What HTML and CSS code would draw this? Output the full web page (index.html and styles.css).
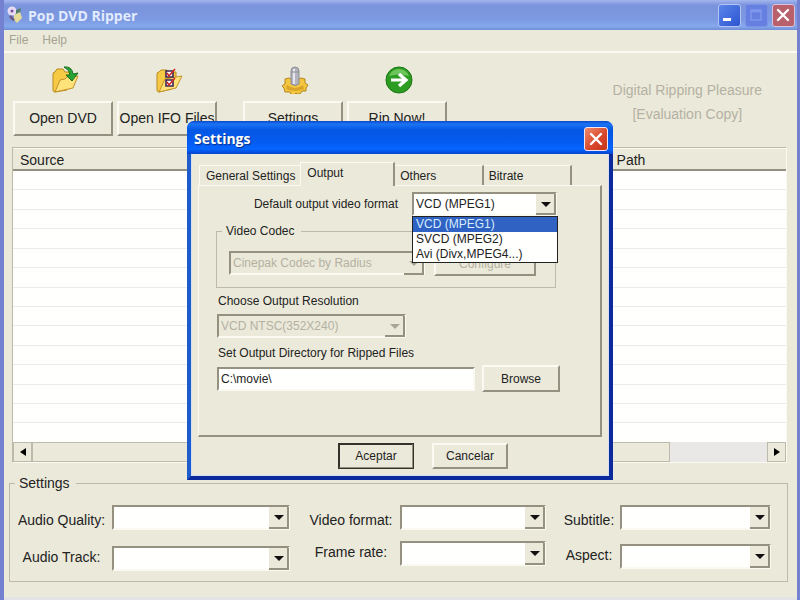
FILE: index.html
```html
<!DOCTYPE html>
<html lang="en">
<head>
<meta charset="utf-8">
<title>Pop DVD Ripper</title>
<link rel="stylesheet" href="styles.css">
</head>
<body>
<main class="window">
  <header class="titlebar">
    <svg class="app-icon" viewBox="0 0 16 18" width="16" height="18" aria-hidden="true">
      <circle cx="5" cy="5" r="4.5" fill="#e8dcf4"/><circle cx="5" cy="5" r="1.5" fill="#7a4f9c"/>
      <path d="M9 4l5-2-1 6-4 1z" fill="#4f7f6a"/><path d="M7 9l6-3 2 6-5 5-3-3z" fill="#e6dc9a"/><path d="M4 9l4 5-2 1-4-4z" fill="#6a5a80"/>
    </svg>
    <h1 class="title">Pop DVD Ripper</h1>
    <div class="controls">
      <button class="ctl min" aria-label="Minimize"><svg viewBox="0 0 20 20" width="20" height="20"><path d="M4 13h8v3H4z" fill="#fff"/></svg></button>
      <button class="ctl max" aria-label="Maximize" disabled><svg viewBox="0 0 20 20" width="20" height="20"><path d="M5 5h10v10H5zM5 6.500h10" fill="none" stroke="#7f97ec" stroke-width="1.500"/></svg></button>
      <button class="ctl close" aria-label="Close"><svg viewBox="0 0 20 20" width="20" height="20"><path d="M5 5l10 10M15 5L5 15" stroke="#fff" stroke-width="2.400" stroke-linecap="round"/></svg></button>
    </div>
  </header>
  <nav class="menu"><a href="#file">File</a><a href="#help">Help</a></nav>
  <section class="toolbar">
    <div class="tool">
      <svg viewBox="0 0 28 28" width="28" height="28" aria-hidden="true">
        <path d="M2 8q0-2 2-2l2-3h6l2 3h5v4l-3 14-12 2q-2 0-2-2z" fill="#f6ca45" stroke="#b98a1e"/>
        <path d="M4 26l5-12 5-1 2-2 11-1-5 12z" fill="#ffe27a" stroke="#c2922a"/>
        <path d="M13 1q8-1 9 7l5-1-6 8-6-6 4 0q0-5-6-8z" fill="#2aa336" stroke="#14701f"/>
      </svg>
      <button class="btn">Open DVD</button>
    </div>
    <div class="tool">
      <svg viewBox="0 0 28 28" width="28" height="28" aria-hidden="true">
        <path d="M2 8q0-2 2-2l2-2h6l2 2h7v5l-4 12-13 3q-2 0-2-2z" fill="#f6ca45" stroke="#b98a1e"/>
        <path d="M4 26l6-13 17-3-6 12z" fill="#ffe27a" stroke="#c2922a"/>
        <path d="M11 5h7v6h-7zM11 14h7v6h-7z" fill="#fff" stroke="#3a2450" stroke-width="1.600"/>
        <path d="M12 7l2 3 6-7M12 16l2 3 6-7" fill="none" stroke="#cf2a22" stroke-width="1.600"/>
      </svg>
      <button class="btn">Open IFO Files</button>
    </div>
    <div class="tool apart">
      <svg viewBox="0 0 28 28" width="28" height="28" aria-hidden="true">
        <path d="M4 13l4-1 2 1h8l2-1 4 1v4l3 2-2 3 0 3-4 0-2 3h-3l-1-1-2 2-3-1-1-2-5 0-1-4-2-2 3-2z" fill="#f3c63f" stroke="#b3851c"/>
        <path d="M6 19q8 6 16 0l1 4q-9 4-18 0z" fill="#dba52a"/>
        <path d="M10 5q0-4 4-4t4 4v13q-4 3-8 0z" fill="#b4b4be" stroke="#8c8c96"/><path d="M13 3v15" stroke="#e6e6ee" stroke-width="2"/><path d="M10 6h8" stroke="#8c8c96"/>
      </svg>
      <button class="btn">Settings</button>
    </div>
    <div class="tool">
      <svg viewBox="0 0 28 28" width="28" height="28" aria-hidden="true">
        <circle cx="14" cy="14" r="13" fill="#2c9c22" stroke="#187512"/><path d="M4 10q3-7 10-7t10 7q-10-3-20 0z" fill="#6cc65c"/>
        <path d="M6 14h14M14 8l7 6-7 6" fill="none" stroke="#fff" stroke-width="3.200"/>
      </svg>
      <button class="btn">Rip Now!</button>
    </div>
    <p class="slogan">Digital Ripping Pleasure<br>[Evaluation Copy]</p>
  </section>
  <section class="list">
    <table class="grid">
      <thead><tr><th class="source">Source</th><th>Path</th></tr></thead>
      <tbody>
        <tr><td></td><td></td></tr><tr><td></td><td></td></tr><tr><td></td><td></td></tr><tr><td></td><td></td></tr>
        <tr><td></td><td></td></tr><tr><td></td><td></td></tr><tr><td></td><td></td></tr><tr><td></td><td></td></tr>
        <tr><td></td><td></td></tr><tr><td></td><td></td></tr><tr><td></td><td></td></tr><tr><td></td><td></td></tr>
        <tr><td></td><td></td></tr><tr><td></td><td></td></tr>
      </tbody>
    </table>
    <div class="scrollbar">
      <button class="arrow" aria-label="Scroll left"><svg viewBox="0 0 6 8" width="6" height="8"><path d="M6 0v8L0 4z"/></svg></button>
      <div class="thumb"></div><div class="track"></div>
      <button class="arrow" aria-label="Scroll right"><svg viewBox="0 0 6 8" width="6" height="8"><path d="M0 0v8l6-4z"/></svg></button>
    </div>
  </section>
  <fieldset class="group settings">
    <legend>Settings</legend>
    <div class="pairs audio">
      <label for="aq">Audio Quality:</label><span class="combo"><select id="aq"></select></span>
      <label for="at">Audio Track:</label><span class="combo"><select id="at"></select></span>
    </div>
    <div class="pairs video">
      <label for="vf">Video format:</label><span class="combo"><select id="vf"></select></span>
      <label for="fr">Frame rate:</label><span class="combo"><select id="fr"></select></span>
    </div>
    <div class="pairs sub">
      <label for="st">Subtitle:</label><span class="combo"><select id="st"></select></span>
      <label for="as">Aspect:</label><span class="combo"><select id="as"></select></span>
    </div>
  </fieldset>
</main>

<section class="dialog" role="dialog" aria-labelledby="dlg-title">
  <header class="dialog-bar">
    <h2 class="title" id="dlg-title">Settings</h2>
    <button class="ctl close" aria-label="Close dialog"><svg viewBox="0 0 20 20" width="20" height="20"><path d="M5 5l10 10M15 5L5 15" stroke="#fff" stroke-width="2.400" stroke-linecap="round"/></svg></button>
  </header>
  <div class="dialog-body">
    <div class="tabs" role="tablist">
      <button class="tab first" role="tab">General Settings</button>
      <button class="tab active" role="tab" aria-selected="true">Output</button>
      <button class="tab" role="tab">Others</button>
      <button class="tab" role="tab">Bitrate</button>
    </div>
    <div class="panel" role="tabpanel">
      <div class="format-row">
        <label for="fmt">Default output video format</label>
        <span class="combo"><select id="fmt"><option>VCD (MPEG1)</option></select>
          <ul class="options" role="listbox" aria-label="Formats">
            <li role="option" aria-selected="true">VCD (MPEG1)</li><li role="option">SVCD (MPEG2)</li><li role="option">Avi (Divx,MPEG4...)</li>
          </ul>
        </span>
      </div>
      <fieldset class="group codec">
        <legend>Video Codec</legend>
        <span class="combo"><select aria-label="Video Codec" disabled><option>Cinepak Codec by Radius</option></select></span>
        <button class="btn" disabled>Configure</button>
      </fieldset>
      <label class="caption" for="res">Choose Output Resolution</label>
      <span class="combo resolution"><select id="res" disabled><option>VCD NTSC(352X240)</option></select></span>
      <label class="caption" for="dir">Set Output Directory for Ripped Files</label>
      <div class="dir-row"><input id="dir" type="text" value="C:\movie\"><button class="btn">Browse</button></div>
    </div>
    <footer class="actions"><button class="btn default">Aceptar</button><button class="btn">Cancelar</button></footer>
  </div>
</section>
</body>
</html>
```
FILE: styles.css
```css
:root {
  --face: #ebe9d9;
  --dark: #949181;
  --line: #bdbaa9;
  --light: #fbfaf2;
  --muted: #b4b1a3;
}
* { box-sizing: border-box; }
body {
  margin: 0;
  position: relative;
  font: 14px "Liberation Sans", Arial, sans-serif;
  color: #22221e;
}
button, select, input { font: inherit; color: inherit; margin: 0; border-radius: 0; }
h1, h2, p, ul { margin: 0; padding: 0; }

.window {
  display: flex;
  flex-direction: column;
  min-height: 100vh;
  background: var(--face);
  border: solid #7481d0;
  border-width: 0 3px 0 4px;
}
.window::after { content: ""; height: 3px; background: #e3e3e6; }
.titlebar {
  display: flex;
  align-items: center;
  gap: 5px;
  height: 30px;
  padding: 0 2px 0 3px;
  background: linear-gradient(#a3b6ee 0, #7b94dc 5px, #7c99e1 20px, #86a9ec 26px, #6f8ed8 30px);
}
.title { font: bold 14px "Open Sans", sans-serif; flex: 1; }
.titlebar .title { color: #e2ebff; }
.controls { display: flex; gap: 4px; }
.ctl { width: 23px; height: 23px; padding: 0; border: 1px solid #b3c4f5; border-radius: 3px; background: #3f68de; }
.ctl svg { display: block; }
.min { background: linear-gradient(135deg, #5a85ea, #2c55d0); }
.max { background: #6580e0; border-color: #7b92e6; }
.close { background: #b8606c; border-color: #dcc0dc; }

.menu { display: flex; gap: 14px; height: 23px; padding: 3px 5px 0; font-size: 12px; border-bottom: 2px solid var(--light); }
.menu a { color: #a5a394; text-decoration: none; }

.toolbar { display: flex; gap: 4px; padding: 13px 35px 0 9px; height: 94px; }
.tool { display: flex; flex-direction: column; align-items: center; gap: 7px; width: 100px; }
.tool svg { margin-left: 4px; }
.apart { margin-left: 22px; }
.btn {
  background: var(--face);
  padding: 0;
  border: solid;
  border-width: 2px;
  border-color: var(--light) var(--dark) var(--dark) var(--light);
  white-space: nowrap;
}
.tool .btn { width: 100%; height: 35px; padding-bottom: 2px; }
.slogan { margin-left: auto; padding-top: 12px; text-align: center; line-height: 24px; color: var(--muted); }

.list {
  flex: 1;
  display: flex;
  flex-direction: column;
  margin: 0 10px 0 8px;
  border: solid;
  border-width: 1px;
  border-color: var(--line) var(--light) var(--light) var(--line);
}
.grid { flex: 1; width: 100%; background: #fffffd; display: flex; flex-direction: column; }
.grid thead, .grid tbody, .grid tr { display: flex; width: 100%; }
.grid tbody { flex: 1; flex-direction: column; }
.grid tbody tr { flex: 1; border-bottom: 1px solid #ecece6; }
.grid tbody tr:last-child { border-bottom: 0; }
.grid th { flex: 21; height: 23px; padding: 3px 6px 0 7px; font-weight: normal; text-align: left; background: var(--face); border-top: 1px solid var(--light); border-bottom: 2px solid var(--dark); }
.grid .source { flex: 75; }
.scrollbar { display: flex; height: 20px; background: #e9e8e6; }
.arrow { display: grid; place-items: center; width: 19px; padding: 0; border: 1px solid var(--line); background: var(--face); }
.thumb { flex: 637; background: var(--face); border: 1px solid var(--line); }
.track { flex: 97; }

.group { min-width: 0; margin: 0; border: 1px solid var(--line); }
.group legend { padding: 0 6px 0 4px; }
.settings { display: grid; grid-template-columns: 273fr 238fr 207fr; column-gap: 18px; margin: 12px 9px 15px 5px; padding: 14px 16px 10px 7px; }
.settings legend { margin-left: -2px; line-height: 16px; }
.pairs { display: grid; align-content: start; align-items: center; justify-items: center; column-gap: 6px; }
.pairs label { line-height: 16px; padding-bottom: 4px; white-space: nowrap; }
.pairs label:first-child { padding: 4px 0 0; }
.audio { grid-template-columns: 89px 1fr; row-gap: 16px; }
.video { grid-template-columns: 86px 1fr; row-gap: 11px; }
.sub { grid-template-columns: 50px 1fr; row-gap: 14px; }

.combo { position: relative; display: block; width: 100%; }
.combo select, #dir {
  display: block;
  width: 100%;
  height: 25px;
  padding: 0 18px 0 2px;
  appearance: none;
  background: #fffffd;
  border: 2px solid;
  border-color: var(--dark) var(--light) var(--light) var(--dark);
  outline: 0;
}
.combo::before {
  content: "";
  position: absolute;
  right: 1px;
  top: 2px;
  bottom: 1px;
  width: 18px;
  background: var(--face);
  border: solid var(--dark);
  border-width: 0 2px 2px 0;
  pointer-events: none;
}
.combo::after {
  content: "";
  position: absolute;
  right: 6px;
  top: 10px;
  border: 5px solid transparent;
  border-top-color: #111;
  border-bottom: 0;
  pointer-events: none;
}
.combo:has(select:disabled)::after { border-top-color: #a8a595; }
.combo select:disabled { background: var(--face); color: var(--muted); opacity: 1; }
.btn:disabled { color: var(--muted); }

.dialog {
  position: absolute;
  left: 187px;
  top: 121px;
  width: 426px;
  font-size: 12px;
  background: var(--face);
  border: solid;
  border-width: 0 4px 4px;
  border-color: #0b2b9c #0b2b9c #0b2b9c #1e5bcb;
  border-radius: 8px 8px 0 0;
}
.dialog-bar {
  display: flex;
  align-items: center;
  height: 33px;
  margin: 0 -4px;
  padding: 2px 5px 0 7px;
  border-radius: 7px 7px 0 0;
  background: linear-gradient(#0a48c8 0, #1c74f4 3px, #0457e4 9px, #055cf2 22px, #0566ff 28px, #0444cc 33px);
}
.dialog-bar .title { color: #fff; text-shadow: 1px 1px 1px #0a2f88; }
.dialog-bar .close { width: 24px; height: 24px; background: linear-gradient(135deg, #ee8a6a, #d8452a 60%, #c4381e); border-color: #f4e6ee; }
.dialog-bar .close svg { margin: 1px; }
.dialog-body { padding: 8px 6px 6px; border: 1px solid #d6dff4; border-top: 0; }
.tabs { display: flex; align-items: flex-end; padding: 0 30px 0 1px; }
.tab {
  height: 20px;
  padding: 0 0 0 5px;
  flex: 88;
  text-align: left;
  white-space: nowrap;
  background: var(--face);
  border: solid;
  border-width: 1px 2px 0 0;
  border-color: var(--light) var(--dark) var(--light) var(--light);
}
.tab.first { flex: 102; border-width: 1px 0 0 1px; padding-left: 6px; }
.tab.active { flex: 93; height: 24px; margin-bottom: -1px; padding-bottom: 3px; border-left-width: 1px; padding-left: 6px; position: relative; }
.panel {
  padding: 6px 43px 43px 18px;
  border: 2px solid;
  border-width: 1px 2px 2px 1px;
  border-color: var(--light) var(--dark) var(--dark) var(--light);
}
.format-row { display: flex; align-items: center; justify-content: flex-end; gap: 14px; }
.format-row .combo { width: 145px; }
.panel .combo select, #dir { height: 24px; }
.options {
  position: absolute;
  z-index: 2;
  top: 24px;
  left: 0;
  width: 146px;
  list-style: none;
  line-height: 15px;
  background: #fffffd;
  border: 1px solid #222;
}
.options li { padding-left: 3px; }
.options [aria-selected] { background: #2f62c2; color: #d8ecff; }
.codec { display: flex; gap: 9px; margin: 8px 1px 0 -1px; padding: 12px 19px 11px 12px; }
.codec legend { margin-left: -7px; line-height: 15px; }
.codec .combo { flex: 2; }
.codec .btn { flex: 1; height: 25px; }
.caption { display: block; line-height: 16px; padding-left: 1px; margin: 5px 0; }
.resolution { width: 189px; }
.resolution + .caption { margin: 7px 0 4px; }
.dir-row { display: flex; align-items: center; gap: 7px; margin-right: -3px; }
#dir { flex: 1; min-width: 0; padding-right: 2px; }
.dir-row .btn { width: 78px; height: 27px; }
.actions { display: flex; justify-content: center; gap: 18px; padding: 6px 0 0 46px; }
.actions .btn { width: 76px; height: 26px; }
.actions .default { outline: 1px solid #33332c; outline-offset: -1px; border-color: #33332c var(--dark) var(--dark) #33332c; }
```
